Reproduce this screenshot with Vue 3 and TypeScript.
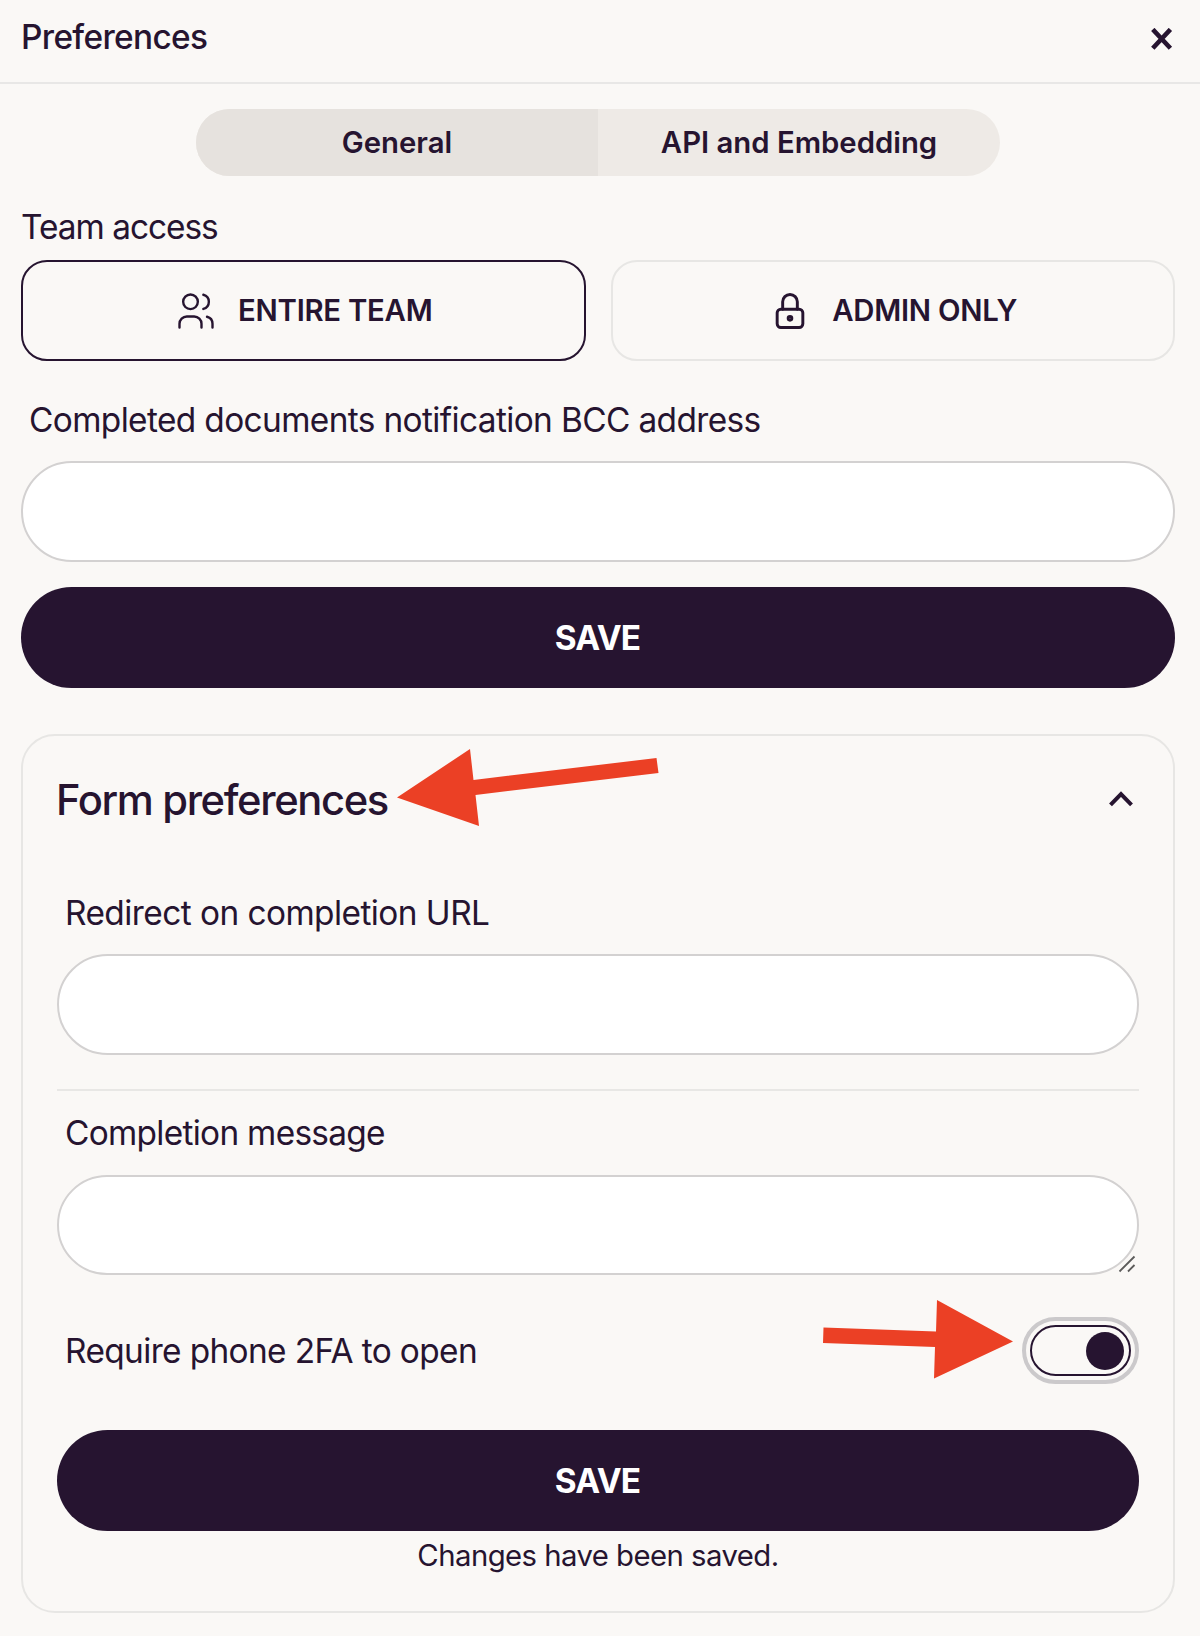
<template>
  <div class="drawer">
    <header class="drawer-head">
      <h1 class="drawer-title">Preferences</h1>
      <button class="close-btn" aria-label="Close">
        <svg width="22" height="22" viewBox="0 0 22 22" fill="none" stroke="currentColor" stroke-width="4.6">
          <path d="M1.8 1.4 19.4 20.2M19.4 1.4 1.8 20.2" />
        </svg>
      </button>
    </header>

    <main class="drawer-body">
      <div class="tabs">
        <button
          v-for="tab in tabs"
          :key="tab"
          class="tab"
          :class="{ active: tab === activeTab }"
          @click="activeTab = tab"
        >{{ tab }}</button>
      </div>

      <div class="label team-label">Team access</div>
      <div class="access">
        <button class="access-btn" :class="{ selected: access === 'team' }" @click="access = 'team'">
          <svg class="icon" viewBox="0 0 24 24">
            <path d="M9 7m-4 0a4 4 0 1 0 8 0a4 4 0 1 0 -8 0" />
            <path d="M3 21v-2a4 4 0 0 1 4 -4h4a4 4 0 0 1 4 4v2" />
            <path d="M16 3.13a4 4 0 0 1 0 7.75" />
            <path d="M21 21v-2a4 4 0 0 0 -3 -3.85" />
          </svg>
          <span>Entire team</span>
        </button>
        <button class="access-btn" :class="{ selected: access === 'admin' }" @click="access = 'admin'">
          <svg class="icon lock" viewBox="0 0 24 24">
            <path d="M5 13a2 2 0 0 1 2 -2h10a2 2 0 0 1 2 2v6a2 2 0 0 1 -2 2h-10a2 2 0 0 1 -2 -2v-6z" />
            <path d="M11 16a1 1 0 1 0 2 0a1 1 0 0 0 -2 0" />
            <path d="M8 11v-4a4 4 0 1 1 8 0v4" />
          </svg>
          <span>Admin only</span>
        </button>
      </div>

      <label class="label bcc-label" for="bcc">Completed documents notification BCC address</label>
      <input id="bcc" v-model="bcc" class="field" type="email" />
      <button class="save-btn top-save">Save</button>

      <!-- Form preferences -->
      <section class="card">
        <div class="card-head">
          <h2 class="card-title">Form preferences</h2>
          <svg class="chevron" width="26" height="18" viewBox="0 0 26 18" fill="none" stroke="currentColor" stroke-width="4">
            <path d="M2.5 14.8 13 4 23.5 14.8" />
          </svg>
          <svg class="arrow arrow-title" width="262" height="78" viewBox="0 0 262 78">
            <path d="M0 48.5 73 0 76.5 31 259.5 9 261.5 24 78.5 46 82 77Z" />
          </svg>
        </div>

        <label class="label url-label" for="redirect">Redirect on completion URL</label>
        <input id="redirect" v-model="redirectUrl" class="field" type="url" />

        <hr class="divider" />

        <label class="label msg-label" for="message">Completion message</label>
        <div class="message">
          <textarea id="message" v-model="message" class="field" rows="1"></textarea>
          <svg class="grip" width="18" height="18" viewBox="0 0 18 18" fill="none" stroke="#5c5b5a" stroke-width="1.8">
            <path d="M1.5 16.5 16.5 1.5M10 16.5 16.5 10" />
          </svg>
        </div>

        <div class="toggle-row">
          <span class="label phone-label">Require phone 2FA to open</span>
          <button class="toggle" :class="{ on: require2fa }" role="switch" :aria-checked="require2fa" @click="require2fa = !require2fa">
            <span class="track"><span class="knob"></span></span>
          </button>
          <svg class="arrow arrow-toggle" width="190" height="79" viewBox="0 0 190 79">
            <path d="M.5 27.5 113 31.5 114 0 190 41.5 111 78.5 112 47 0 43Z" />
          </svg>
        </div>

        <button class="save-btn card-save">Save</button>
        <p class="saved">Changes have been saved.</p>
      </section>
    </main>
  </div>
</template>

<script setup lang="ts">
import { ref } from 'vue'

const tabs = ['General', 'API and Embedding']
const activeTab = ref('General')
const access = ref<'team' | 'admin'>('team')
const bcc = ref('')
const redirectUrl = ref('')
const message = ref('')
const require2fa = ref(true)
</script>

<style>
body { background: #faf8f6; }
</style>

<style scoped>
* { box-sizing: border-box; }
.drawer {
  height: 1636px; overflow: hidden; background: #faf8f6; color: #261430;
  font-family: Inter, "Liberation Sans", sans-serif; font-size: 33.4px; line-height: 48px;
}
button { font: inherit; color: inherit; background: none; border: none; padding: 0; cursor: pointer; }

.drawer-head {
  display: flex; justify-content: space-between; align-items: center;
  height: 84px; padding: 0 27px 10px 21px; border-bottom: 2px solid #e8e7e6;
}
.drawer-title { margin: 1px 0 0; font-size: 33.4px; font-weight: 550; letter-spacing: -0.65px; }
.close-btn { display: flex; margin-top: 6px; }

.drawer-body { padding: 25px 25px 0 21px; }

.tabs { display: grid; grid-template-columns: 1fr 1fr; width: 804px; height: 67px; margin: 0 auto; border-radius: 34px; overflow: hidden; background: #eeeae6; }
.tab { font-size: 29.3px; font-weight: 600; }
.tab.active { background: #e6e2de; }

.label { display: block; padding-left: 8px; white-space: nowrap; letter-spacing: -0.62px; }
.team-label { margin: 27px 0 9px; padding-left: 0; letter-spacing: -1px; }

.access { display: grid; grid-template-columns: 1fr 1fr; gap: 25px; }
.access-btn {
  display: flex; align-items: center; justify-content: center; height: 101px;
  border: 2px solid #e7e6e4; border-radius: 26px;
  font-size: 29.3px; font-weight: 600; letter-spacing: -0.25px; text-transform: uppercase;
}
.access-btn.selected { border-color: #261430; }
.icon { width: 44px; height: 44px; margin-right: 20px; fill: none; stroke: currentColor; stroke-width: 1.3; stroke-linecap: round; stroke-linejoin: round; }
.icon.lock { stroke-width: 1.6; }

.bcc-label { margin: 35px 0 17px; }
.field {
  display: block; width: 100%; height: 101px; padding: 24px 32px; resize: none; outline: none;
  font: inherit; color: inherit; background: #fff; border: 2px solid #d3d1d1; border-radius: 51px;
}

.save-btn {
  display: block; width: 100%; height: 101px; padding: 1px 1px 0 0; border-radius: 51px;
  background: #261430; color: #fff; font-weight: 700; letter-spacing: -0.8px; text-transform: uppercase;
}
.top-save { margin-top: 25px; }

.card { height: 879px; margin-top: 46px; padding: 33px 34px 0; border: 2px solid #e7e6e4; border-radius: 34px; }
.card-head { position: relative; display: flex; align-items: center; justify-content: space-between; height: 60px; padding-right: 5px; }
.card-title { margin: 2px 0 0 -1px; font-size: 41.7px; font-weight: 550; letter-spacing: -1.36px; }
.url-label { margin: 60px 0 17px; letter-spacing: -0.55px; }
.divider { height: 2px; margin: 34px 0 0; border: none; background: #e8e7e5; }
.msg-label { margin: 18px 0; letter-spacing: -0.7px; }
.message { position: relative; }
.message .field { height: 100px; }
.grip { position: absolute; right: 3px; bottom: 2px; }

.toggle-row { position: relative; display: flex; align-items: center; justify-content: space-between; height: 67px; margin-top: 42px; }
.toggle { width: 117px; height: 67px; padding: 4px; border: 4px solid #cbc9cb; border-radius: 34px; }
.track { display: flex; align-items: center; height: 51px; padding: 0 5px; border: 2px solid #261430; border-radius: 26px; }
.toggle.on .track { justify-content: flex-end; }
.knob { width: 38px; height: 38px; border-radius: 50%; background: #261430; }

.card-save { margin-top: 46px; }
.saved { margin: 4px 0 0; font-size: 29.3px; line-height: 42px; letter-spacing: -0.54px; text-align: center; }

/* callout arrows */
.arrow { position: absolute; fill: #eb4025; }
.arrow-title { left: 340px; top: -20px; }
.arrow-toggle { right: 126px; top: -17px; }
</style>
